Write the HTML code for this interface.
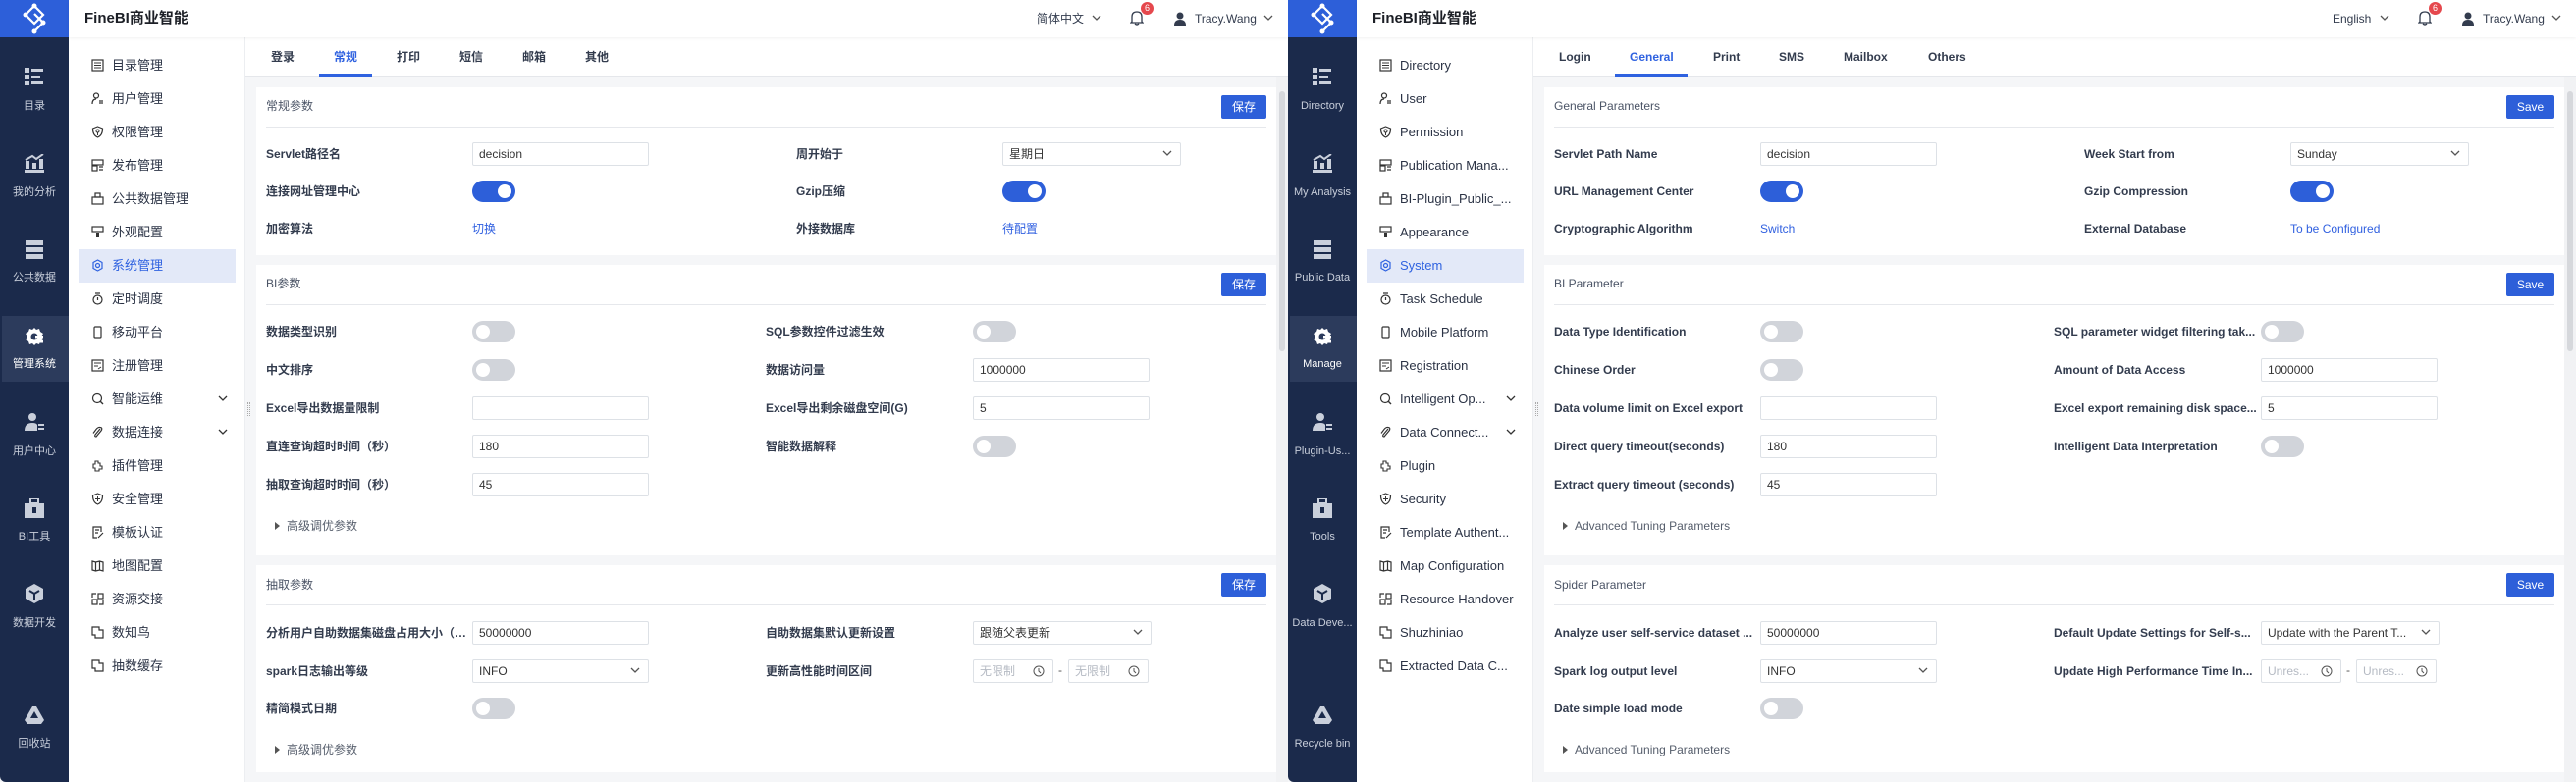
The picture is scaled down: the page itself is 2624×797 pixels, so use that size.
<!DOCTYPE html>
<html><head><meta charset="utf-8">
<style>
*{margin:0;padding:0;box-sizing:border-box}
body{width:2624px;height:797px;overflow:hidden;background:#f5f6f8;font-family:"Liberation Sans","Noto Sans CJK SC",sans-serif;}
.p{position:absolute;top:0;width:1312px;height:797px;overflow:hidden;background:#f5f6f8}
.a{position:absolute}
.side{left:0;top:0;width:70px;height:797px;background:#1b2a4b;border-bottom-left-radius:6px}
.logo{left:0;top:0;width:70px;height:38px;background:#2d5fd9}
.nl{position:absolute;left:0;width:70px;text-align:center;font-size:11px;color:#c9cfdb;line-height:14px;margin-top:-7px;white-space:nowrap;overflow:hidden}
.act{left:2px;top:322px;width:68px;height:67px;background:#2c3b5c}
.hdr{left:70px;top:0;width:1242px;height:38px;background:#fff;box-shadow:0 1px 3px rgba(0,0,0,.06);z-index:2}
.s2{left:70px;top:38px;width:180px;height:759px;background:#fff;border-right:1px solid #eceef1}
.si{position:absolute;left:114px;font-size:13px;color:#2b3345;line-height:16px;margin-top:-8px;white-space:nowrap}
.sic{position:absolute;left:93px;width:13px;height:13px;margin-top:-7px}
.sact{left:80px;top:254px;width:160px;height:34px;background:#e3e9f8}
.tabs{left:250px;top:38px;width:1062px;height:40px;background:#fff;border-bottom:1px solid #e5e7eb}
.tb{position:absolute;top:50px;font-size:12px;font-weight:bold;color:#333c4e;line-height:16px}
.card{left:261px;width:1039px;background:#fff}
.tt{position:absolute;left:271px;font-size:12px;color:#4b5466;line-height:16px;margin-top:-8px;white-space:nowrap}
.dv{position:absolute;left:271px;width:1019px;height:1px;background:#e6e8ec}
.sv{position:absolute;left:1244px;width:46px;height:24px;background:#2d5fd9;color:#fff;font-size:12px;text-align:center;line-height:24px;border-radius:2px}
.lb{position:absolute;font-size:12px;font-weight:bold;color:#333c4e;line-height:16px;margin-top:-8px;white-space:nowrap}
.in{position:absolute;height:24px;margin-top:-12px;border:1px solid #dde1e6;border-radius:2px;background:#fff;font-size:12px;color:#333;line-height:22px;padding-left:6px;white-space:nowrap;overflow:hidden}
.ph{color:#b5bac3}
.tg{position:absolute;width:44px;height:22px;margin-top:-11px;border-radius:11px;background:#d1d4da}
.tg::after{content:"";position:absolute;left:4px;top:4px;width:14px;height:14px;border-radius:50%;background:#fff}
.tg.on{background:#2d5fd9}
.tg.on::after{left:26px}
.lk{position:absolute;font-size:12px;color:#3060e0;line-height:16px;margin-top:-8px}
.ch{position:absolute;right:8px;top:7px}
.adv{position:absolute;left:280px;font-size:12px;color:#555d6b;line-height:16px;margin-top:-8px}
.adv::before{content:"";display:inline-block;border-left:5px solid #555;border-top:4px solid transparent;border-bottom:4px solid transparent;margin-right:7px;vertical-align:0}
.sc{left:1300px;top:78px;width:12px;height:719px;background:#f1f2f4}
.th{left:1303px;top:93px;width:6px;height:265px;background:#d6d8dc;border-radius:3px}
.hr{position:absolute;top:11px;font-size:12px;color:#333c4e;line-height:16px}
</style></head><body>

<div class="p" style="left:0">
 <div class="a side"></div>
 <div class="a logo"><svg width="70" height="38" viewBox="0 0 70 38"><g fill="none" stroke="#fff" stroke-width="2.2"><path d="M35 6 L44 15 L35 24 L26 15 Z"/><path d="M35 14 L44 23 L35 32"/></g><circle cx="35" cy="6" r="2.5" fill="#fff"/><circle cx="26" cy="15" r="2.5" fill="#fff"/><circle cx="44" cy="23" r="2.5" fill="#fff"/><circle cx="35" cy="32" r="2.5" fill="#fff"/></svg></div>
 <div class="a act"></div>
 <svg class="a" style="left:25px;top:69px" width="20" height="18"><g fill="#c9cfdb"><rect x="0" y="0" width="5" height="5"/><rect x="7" y="1" width="12" height="3"/><rect x="0" y="7" width="5" height="5"/><rect x="7" y="8" width="9" height="3"/><rect x="0" y="14" width="5" height="4"/><rect x="7" y="14" width="12" height="3"/></g></svg>
 <div class="nl" style="top:108px">目录</div>
 <svg class="a" style="left:25px;top:157px" width="20" height="19"><g fill="#c9cfdb"><rect x="0" y="16" width="20" height="3"/><rect x="1" y="7" width="4" height="8"/><rect x="8" y="9" width="4" height="6"/><rect x="15" y="5" width="4" height="10"/><path d="M1 6 L8 2 L12 5 L19 0" stroke="#c9cfdb" stroke-width="2" fill="none"/></g></svg>
 <div class="nl" style="top:196px">我的分析</div>
 <svg class="a" style="left:25px;top:245px" width="20" height="20"><g fill="#c9cfdb"><rect x="1" y="0" width="18" height="5"/><rect x="1" y="7" width="18" height="5"/><rect x="1" y="14" width="18" height="5"/></g></svg>
 <div class="nl" style="top:283px">公共数据</div>
 <svg class="a" style="left:25px;top:333px" width="20" height="20"><path d="M10 1 L12 3 L15 2 L16 5 L19 7 L17 10 L19 13 L16 15 L15 18 L12 17 L10 19 L8 17 L5 18 L4 15 L1 13 L3 10 L1 7 L4 5 L5 2 L8 3 Z" fill="#fff"/><circle cx="10" cy="10" r="3.5" fill="#2c3b5c"/><rect x="11" y="9" width="8" height="2.5" fill="#fff"/><rect x="11" y="14" width="8" height="2.5" fill="#fff"/></svg>
 <div class="nl" style="top:371px;color:#fff">管理系统</div>
 <svg class="a" style="left:25px;top:420px" width="20" height="20"><circle cx="8" cy="5" r="4" fill="#c9cfdb"/><path d="M0 19 Q0 11 8 11 Q12 11 13 13 L13 19 Z" fill="#c9cfdb"/><rect x="14" y="12" width="6" height="2" fill="#c9cfdb"/><rect x="14" y="16" width="6" height="2" fill="#c9cfdb"/></svg>
 <div class="nl" style="top:460px">用户中心</div>
 <svg class="a" style="left:25px;top:508px" width="20" height="20"><rect x="6" y="0" width="8" height="5" fill="none" stroke="#c9cfdb" stroke-width="2"/><rect x="0" y="5" width="20" height="15" fill="#c9cfdb"/><rect x="8" y="9" width="4" height="6" fill="#1b2a4b"/></svg>
 <div class="nl" style="top:547px">BI工具</div>
 <svg class="a" style="left:25px;top:595px" width="20" height="20"><path d="M10 0 L19 5 L19 15 L10 20 L1 15 L1 5 Z" fill="#c9cfdb"/><path d="M5 7 L10 10 L15 7 M10 10 L10 16" stroke="#1b2a4b" stroke-width="2" fill="none"/></svg>
 <div class="nl" style="top:635px">数据开发</div>
 <svg class="a" style="left:25px;top:720px" width="20" height="18"><path d="M8 0 L12 0 L20 14 L17 18 L3 18 L0 14 Z" fill="#c9cfdb"/><path d="M10 5 L6 12 L14 12 Z" fill="#1b2a4b"/></svg>
 <div class="nl" style="top:758px">回收站</div>

 <div class="a hdr">
  <div class="a" style="left:16px;top:10px;font-size:15px;font-weight:bold;color:#1c1f26;line-height:18px">FineBI商业智能</div>
  <div class="hr" style="left:986px">简体中文</div>
  <svg class="a" style="left:1042px;top:15px" width="10" height="7"><path d="M1 1 L5 5 L9 1" stroke="#555" stroke-width="1.3" fill="none"/></svg>
  <svg class="a" style="left:1081px;top:10px" width="14" height="16"><path d="M2 12 L2 7 Q2 2 7 2 Q12 2 12 7 L12 12 L13 13 L1 13 Z M5 14 Q7 16 9 14" stroke="#333c4e" stroke-width="1.3" fill="none"/></svg>
  <div class="a" style="left:1092px;top:2px;width:13px;height:13px;border-radius:50%;background:#e5484d;color:#fff;font-size:9px;line-height:13px;text-align:center">6</div>
  <svg class="a" style="left:1126px;top:12px" width="12" height="14"><circle cx="6" cy="4" r="3.5" fill="#333c4e"/><path d="M0 14 Q0 8 6 8 Q12 8 12 14 Z" fill="#333c4e"/></svg>
  <div class="hr" style="left:1147px">Tracy.Wang</div>
  <svg class="a" style="left:1217px;top:15px" width="10" height="7"><path d="M1 1 L5 5 L9 1" stroke="#555" stroke-width="1.3" fill="none"/></svg>
 </div>

 <div class="a s2"></div>
 <div class="a sact"></div>
 <svg class="sic" style="top:67px" viewBox="0 0 13 13"><rect x="1" y="1" width="11" height="11" fill="none" stroke="#333" stroke-width="1.2"/><path d="M3 4h7M3 6.5h7M3 9h7" stroke="#333"/></svg><div class="si" style="top:67px">目录管理</div>
 <svg class="sic" style="top:101px" viewBox="0 0 13 13"><circle cx="5" cy="3.5" r="2.5" fill="none" stroke="#333" stroke-width="1.2"/><path d="M1 12 Q1 7 5 7 M8 9h4M8 11h4" stroke="#333" stroke-width="1.2" fill="none"/></svg><div class="si" style="top:101px">用户管理</div>
 <svg class="sic" style="top:135px" viewBox="0 0 13 13"><path d="M6.5 1 L11.5 3 Q11.5 10 6.5 12 Q1.5 10 1.5 3 Z" fill="none" stroke="#333" stroke-width="1.2"/><circle cx="6.5" cy="5.5" r="1.5" fill="none" stroke="#333"/><path d="M6.5 7v3" stroke="#333"/></svg><div class="si" style="top:135px">权限管理</div>
 <svg class="sic" style="top:169px" viewBox="0 0 13 13"><rect x="1" y="1" width="11" height="5" fill="none" stroke="#333" stroke-width="1.2"/><rect x="1" y="7" width="5" height="5" fill="none" stroke="#333" stroke-width="1.2"/><path d="M8 8h4M8 11h4" stroke="#333" stroke-width="1.2"/></svg><div class="si" style="top:169px">发布管理</div>
 <svg class="sic" style="top:203px" viewBox="0 0 13 13"><rect x="1" y="5" width="11" height="7" fill="none" stroke="#333" stroke-width="1.2"/><rect x="4" y="1" width="5" height="4" fill="none" stroke="#333" stroke-width="1.2"/></svg><div class="si" style="top:203px">公共数据管理</div>
 <svg class="sic" style="top:237px" viewBox="0 0 13 13"><rect x="1" y="1" width="11" height="5" fill="none" stroke="#333" stroke-width="1.2"/><rect x="5" y="7" width="3" height="5" fill="#333"/></svg><div class="si" style="top:237px">外观配置</div>
 <svg class="sic" style="top:271px" viewBox="0 0 13 13"><path d="M6.5 1 L11 3.5 L11 9.5 L6.5 12 L2 9.5 L2 3.5 Z" fill="none" stroke="#2f62e0" stroke-width="1.2"/><circle cx="6.5" cy="6.5" r="2" fill="none" stroke="#2f62e0" stroke-width="1.2"/></svg><div class="si" style="top:271px;color:#2f62e0">系统管理</div>
 <svg class="sic" style="top:305px" viewBox="0 0 13 13"><circle cx="6.5" cy="7.5" r="4.5" fill="none" stroke="#333" stroke-width="1.2"/><path d="M4 1h5M6.5 5v3" stroke="#333" stroke-width="1.2"/></svg><div class="si" style="top:305px">定时调度</div>
 <svg class="sic" style="top:339px" viewBox="0 0 13 13"><rect x="3" y="1" width="7" height="11" rx="1" fill="none" stroke="#333" stroke-width="1.2"/></svg><div class="si" style="top:339px">移动平台</div>
 <svg class="sic" style="top:373px" viewBox="0 0 13 13"><rect x="1" y="1" width="11" height="11" fill="none" stroke="#333" stroke-width="1.2"/><path d="M3 4h7M3 7h4M7 10l3-2" stroke="#333"/></svg><div class="si" style="top:373px">注册管理</div>
 <svg class="sic" style="top:407px" viewBox="0 0 13 13"><circle cx="6" cy="6" r="4.5" fill="none" stroke="#333" stroke-width="1.2"/><path d="M9 9l3 3" stroke="#333" stroke-width="1.4"/></svg><div class="si" style="top:407px">智能运维</div>
 <svg class="a" style="left:222px;top:403px" width="10" height="7"><path d="M1 1 L5 5 L9 1" stroke="#333" stroke-width="1.3" fill="none"/></svg>
 <svg class="sic" style="top:441px" viewBox="0 0 13 13"><path d="M9 3 L4 9 Q3 11 5 11 L10 5 Q12 2 9 1.5 Q7 1 5 3.5 L2 7.5" stroke="#333" stroke-width="1.2" fill="none"/></svg><div class="si" style="top:441px">数据连接</div>
 <svg class="a" style="left:222px;top:437px" width="10" height="7"><path d="M1 1 L5 5 L9 1" stroke="#333" stroke-width="1.3" fill="none"/></svg>
 <svg class="sic" style="top:475px" viewBox="0 0 13 13"><path d="M4 2h3v2h2v3h2v3H8v2H4V9H2V5h2z" fill="none" stroke="#333" stroke-width="1.1"/></svg><div class="si" style="top:475px">插件管理</div>
 <svg class="sic" style="top:509px" viewBox="0 0 13 13"><path d="M6.5 1 L11.5 3 Q11.5 10 6.5 12 Q1.5 10 1.5 3 Z" fill="none" stroke="#333" stroke-width="1.2"/><path d="M6.5 4v5M4 6.5h5" stroke="#333"/></svg><div class="si" style="top:509px">安全管理</div>
 <svg class="sic" style="top:543px" viewBox="0 0 13 13"><path d="M10 6V1H2v11h4" fill="none" stroke="#333" stroke-width="1.2"/><path d="M4 4h4M4 7h3M7 12l5-5" stroke="#333" stroke-width="1.2"/></svg><div class="si" style="top:543px">模板认证</div>
 <svg class="sic" style="top:577px" viewBox="0 0 13 13"><path d="M1 2l3.5 1 4-1 3.5 1v9l-3.5-1-4 1L1 11z M4.5 3v9M8.5 2v9" fill="none" stroke="#333" stroke-width="1.2"/></svg><div class="si" style="top:577px">地图配置</div>
 <svg class="sic" style="top:611px" viewBox="0 0 13 13"><rect x="7" y="1" width="5" height="5" fill="none" stroke="#333" stroke-width="1.2"/><rect x="1" y="7" width="5" height="5" fill="none" stroke="#333" stroke-width="1.2"/><path d="M1 5V1h4M12 8v4H8" stroke="#333" stroke-width="1.2" fill="none"/></svg><div class="si" style="top:611px">资源交接</div>
 <svg class="sic" style="top:645px" viewBox="0 0 13 13"><path d="M1 1h7v3h4v8H4V9H1z" fill="none" stroke="#333" stroke-width="1.2"/></svg><div class="si" style="top:645px">数知鸟</div>
 <svg class="sic" style="top:679px" viewBox="0 0 13 13"><path d="M1 1h7v3h4v8H4V9H1z" fill="none" stroke="#333" stroke-width="1.2"/></svg><div class="si" style="top:679px">抽数缓存</div>

 <div class="a tabs"></div>
 <div class="tb" style="left:276px">登录</div>
 <div class="tb" style="left:340px;color:#2f62e0">常规</div>
 <div class="a" style="left:325px;top:75px;width:54px;height:3px;background:#2f62e0"></div>
 <div class="tb" style="left:404px">打印</div>
 <div class="tb" style="left:468px">短信</div>
 <div class="tb" style="left:532px">邮箱</div>
 <div class="tb" style="left:596px">其他</div>

 <div class="a sc"></div><div class="a th"></div>
 <div class="a" style="left:252px;top:410px;width:3px;height:14px;border-left:1px dotted #aaa;border-right:1px dotted #aaa"></div>

 <div class="a card" style="top:89px;height:171px"></div>
 <div class="tt" style="top:108px">常规参数</div>
 <div class="sv" style="top:97px">保存</div>
 <div class="dv" style="top:129px"></div>
 <div class="lb" style="left:271px;top:157px">Servlet路径名</div>
 <div class="in" style="left:481px;top:157px;width:180px">decision</div>
 <div class="lb" style="left:811px;top:157px">周开始于</div>
 <div class="in" style="left:1021px;top:157px;width:182px">星期日<svg class="ch" width="10" height="7"><path d="M1 1 L5 5 L9 1" stroke="#555" stroke-width="1.3" fill="none"/></svg></div>
 <div class="lb" style="left:271px;top:195px">连接网址管理中心</div>
 <div class="tg on" style="left:481px;top:195px"></div>
 <div class="lb" style="left:811px;top:195px">Gzip压缩</div>
 <div class="tg on" style="left:1021px;top:195px"></div>
 <div class="lb" style="left:271px;top:233px">加密算法</div>
 <div class="lk" style="left:481px;top:233px">切换</div>
 <div class="lb" style="left:811px;top:233px">外接数据库</div>
 <div class="lk" style="left:1021px;top:233px">待配置</div>

 <div class="a card" style="top:270px;height:296px"></div>
 <div class="tt" style="top:289px">BI参数</div>
 <div class="sv" style="top:278px">保存</div>
 <div class="dv" style="top:310px"></div>
 <div class="lb" style="left:271px;top:338px">数据类型识别</div>
 <div class="tg" style="left:481px;top:338px"></div>
 <div class="lb" style="left:780px;top:338px">SQL参数控件过滤生效</div>
 <div class="tg" style="left:991px;top:338px"></div>
 <div class="lb" style="left:271px;top:377px">中文排序</div>
 <div class="tg" style="left:481px;top:377px"></div>
 <div class="lb" style="left:780px;top:377px">数据访问量</div>
 <div class="in" style="left:991px;top:377px;width:180px">1000000</div>
 <div class="lb" style="left:271px;top:416px">Excel导出数据量限制</div>
 <div class="in" style="left:481px;top:416px;width:180px"></div>
 <div class="lb" style="left:780px;top:416px">Excel导出剩余磁盘空间(G)</div>
 <div class="in" style="left:991px;top:416px;width:180px">5</div>
 <div class="lb" style="left:271px;top:455px">直连查询超时时间（秒）</div>
 <div class="in" style="left:481px;top:455px;width:180px">180</div>
 <div class="lb" style="left:780px;top:455px">智能数据解释</div>
 <div class="tg" style="left:991px;top:455px"></div>
 <div class="lb" style="left:271px;top:494px">抽取查询超时时间（秒）</div>
 <div class="in" style="left:481px;top:494px;width:180px">45</div>
 <div class="adv" style="top:536px">高级调优参数</div>

 <div class="a card" style="top:576px;height:211px"></div>
 <div class="tt" style="top:596px">抽取参数</div>
 <div class="sv" style="top:584px">保存</div>
 <div class="dv" style="top:616px"></div>
 <div class="lb" style="left:271px;top:645px">分析用户自助数据集磁盘占用大小（…</div>
 <div class="in" style="left:481px;top:645px;width:180px">50000000</div>
 <div class="lb" style="left:780px;top:645px">自助数据集默认更新设置</div>
 <div class="in" style="left:991px;top:645px;width:182px">跟随父表更新<svg class="ch" width="10" height="7"><path d="M1 1 L5 5 L9 1" stroke="#555" stroke-width="1.3" fill="none"/></svg></div>
 <div class="lb" style="left:271px;top:684px">spark日志输出等级</div>
 <div class="in" style="left:481px;top:684px;width:180px">INFO<svg class="ch" width="10" height="7"><path d="M1 1 L5 5 L9 1" stroke="#555" stroke-width="1.3" fill="none"/></svg></div>
 <div class="lb" style="left:780px;top:684px">更新高性能时间区间</div>
 <div class="in ph" style="left:991px;top:684px;width:82px">无限制<svg class="ch" style="top:5px" width="12" height="12"><circle cx="6" cy="6" r="5" stroke="#555" fill="none"/><path d="M6 3v3l2 2" stroke="#555" fill="none"/></svg></div>
 <div class="a" style="left:1078px;top:676px;font-size:12px;color:#555">-</div>
 <div class="in ph" style="left:1088px;top:684px;width:82px">无限制<svg class="ch" style="top:5px" width="12" height="12"><circle cx="6" cy="6" r="5" stroke="#555" fill="none"/><path d="M6 3v3l2 2" stroke="#555" fill="none"/></svg></div>
 <div class="lb" style="left:271px;top:722px">精简模式日期</div>
 <div class="tg" style="left:481px;top:722px"></div>
 <div class="adv" style="top:764px">高级调优参数</div>
</div>

<div class="p" style="left:1312px">
 <div class="a side"></div>
 <div class="a logo"><svg width="70" height="38" viewBox="0 0 70 38"><g fill="none" stroke="#fff" stroke-width="2.2"><path d="M35 6 L44 15 L35 24 L26 15 Z"/><path d="M35 14 L44 23 L35 32"/></g><circle cx="35" cy="6" r="2.5" fill="#fff"/><circle cx="26" cy="15" r="2.5" fill="#fff"/><circle cx="44" cy="23" r="2.5" fill="#fff"/><circle cx="35" cy="32" r="2.5" fill="#fff"/></svg></div>
 <div class="a act"></div>
 <svg class="a" style="left:25px;top:69px" width="20" height="18"><g fill="#c9cfdb"><rect x="0" y="0" width="5" height="5"/><rect x="7" y="1" width="12" height="3"/><rect x="0" y="7" width="5" height="5"/><rect x="7" y="8" width="9" height="3"/><rect x="0" y="14" width="5" height="4"/><rect x="7" y="14" width="12" height="3"/></g></svg>
 <div class="nl" style="top:108px">Directory</div>
 <svg class="a" style="left:25px;top:157px" width="20" height="19"><g fill="#c9cfdb"><rect x="0" y="16" width="20" height="3"/><rect x="1" y="7" width="4" height="8"/><rect x="8" y="9" width="4" height="6"/><rect x="15" y="5" width="4" height="10"/><path d="M1 6 L8 2 L12 5 L19 0" stroke="#c9cfdb" stroke-width="2" fill="none"/></g></svg>
 <div class="nl" style="top:196px">My Analysis</div>
 <svg class="a" style="left:25px;top:245px" width="20" height="20"><g fill="#c9cfdb"><rect x="1" y="0" width="18" height="5"/><rect x="1" y="7" width="18" height="5"/><rect x="1" y="14" width="18" height="5"/></g></svg>
 <div class="nl" style="top:283px">Public Data</div>
 <svg class="a" style="left:25px;top:333px" width="20" height="20"><path d="M10 1 L12 3 L15 2 L16 5 L19 7 L17 10 L19 13 L16 15 L15 18 L12 17 L10 19 L8 17 L5 18 L4 15 L1 13 L3 10 L1 7 L4 5 L5 2 L8 3 Z" fill="#fff"/><circle cx="10" cy="10" r="3.5" fill="#2c3b5c"/><rect x="11" y="9" width="8" height="2.5" fill="#fff"/><rect x="11" y="14" width="8" height="2.5" fill="#fff"/></svg>
 <div class="nl" style="top:371px;color:#fff">Manage</div>
 <svg class="a" style="left:25px;top:420px" width="20" height="20"><circle cx="8" cy="5" r="4" fill="#c9cfdb"/><path d="M0 19 Q0 11 8 11 Q12 11 13 13 L13 19 Z" fill="#c9cfdb"/><rect x="14" y="12" width="6" height="2" fill="#c9cfdb"/><rect x="14" y="16" width="6" height="2" fill="#c9cfdb"/></svg>
 <div class="nl" style="top:460px">Plugin-Us...</div>
 <svg class="a" style="left:25px;top:508px" width="20" height="20"><rect x="6" y="0" width="8" height="5" fill="none" stroke="#c9cfdb" stroke-width="2"/><rect x="0" y="5" width="20" height="15" fill="#c9cfdb"/><rect x="8" y="9" width="4" height="6" fill="#1b2a4b"/></svg>
 <div class="nl" style="top:547px">Tools</div>
 <svg class="a" style="left:25px;top:595px" width="20" height="20"><path d="M10 0 L19 5 L19 15 L10 20 L1 15 L1 5 Z" fill="#c9cfdb"/><path d="M5 7 L10 10 L15 7 M10 10 L10 16" stroke="#1b2a4b" stroke-width="2" fill="none"/></svg>
 <div class="nl" style="top:635px">Data Deve...</div>
 <svg class="a" style="left:25px;top:720px" width="20" height="18"><path d="M8 0 L12 0 L20 14 L17 18 L3 18 L0 14 Z" fill="#c9cfdb"/><path d="M10 5 L6 12 L14 12 Z" fill="#1b2a4b"/></svg>
 <div class="nl" style="top:758px">Recycle bin</div>

 <div class="a hdr">
  <div class="a" style="left:16px;top:10px;font-size:15px;font-weight:bold;color:#1c1f26;line-height:18px">FineBI商业智能</div>
  <div class="hr" style="left:994px">English</div>
  <svg class="a" style="left:1042px;top:15px" width="10" height="7"><path d="M1 1 L5 5 L9 1" stroke="#555" stroke-width="1.3" fill="none"/></svg>
  <svg class="a" style="left:1081px;top:10px" width="14" height="16"><path d="M2 12 L2 7 Q2 2 7 2 Q12 2 12 7 L12 12 L13 13 L1 13 Z M5 14 Q7 16 9 14" stroke="#333c4e" stroke-width="1.3" fill="none"/></svg>
  <div class="a" style="left:1092px;top:2px;width:13px;height:13px;border-radius:50%;background:#e5484d;color:#fff;font-size:9px;line-height:13px;text-align:center">6</div>
  <svg class="a" style="left:1126px;top:12px" width="12" height="14"><circle cx="6" cy="4" r="3.5" fill="#333c4e"/><path d="M0 14 Q0 8 6 8 Q12 8 12 14 Z" fill="#333c4e"/></svg>
  <div class="hr" style="left:1147px">Tracy.Wang</div>
  <svg class="a" style="left:1217px;top:15px" width="10" height="7"><path d="M1 1 L5 5 L9 1" stroke="#555" stroke-width="1.3" fill="none"/></svg>
 </div>

 <div class="a s2"></div>
 <div class="a sact"></div>
 <svg class="sic" style="top:67px" viewBox="0 0 13 13"><rect x="1" y="1" width="11" height="11" fill="none" stroke="#333" stroke-width="1.2"/><path d="M3 4h7M3 6.5h7M3 9h7" stroke="#333"/></svg><div class="si" style="top:67px">Directory</div>
 <svg class="sic" style="top:101px" viewBox="0 0 13 13"><circle cx="5" cy="3.5" r="2.5" fill="none" stroke="#333" stroke-width="1.2"/><path d="M1 12 Q1 7 5 7 M8 9h4M8 11h4" stroke="#333" stroke-width="1.2" fill="none"/></svg><div class="si" style="top:101px">User</div>
 <svg class="sic" style="top:135px" viewBox="0 0 13 13"><path d="M6.5 1 L11.5 3 Q11.5 10 6.5 12 Q1.5 10 1.5 3 Z" fill="none" stroke="#333" stroke-width="1.2"/><circle cx="6.5" cy="5.5" r="1.5" fill="none" stroke="#333"/><path d="M6.5 7v3" stroke="#333"/></svg><div class="si" style="top:135px">Permission</div>
 <svg class="sic" style="top:169px" viewBox="0 0 13 13"><rect x="1" y="1" width="11" height="5" fill="none" stroke="#333" stroke-width="1.2"/><rect x="1" y="7" width="5" height="5" fill="none" stroke="#333" stroke-width="1.2"/><path d="M8 8h4M8 11h4" stroke="#333" stroke-width="1.2"/></svg><div class="si" style="top:169px">Publication Mana...</div>
 <svg class="sic" style="top:203px" viewBox="0 0 13 13"><rect x="1" y="5" width="11" height="7" fill="none" stroke="#333" stroke-width="1.2"/><rect x="4" y="1" width="5" height="4" fill="none" stroke="#333" stroke-width="1.2"/></svg><div class="si" style="top:203px">BI-Plugin_Public_...</div>
 <svg class="sic" style="top:237px" viewBox="0 0 13 13"><rect x="1" y="1" width="11" height="5" fill="none" stroke="#333" stroke-width="1.2"/><rect x="5" y="7" width="3" height="5" fill="#333"/></svg><div class="si" style="top:237px">Appearance</div>
 <svg class="sic" style="top:271px" viewBox="0 0 13 13"><path d="M6.5 1 L11 3.5 L11 9.5 L6.5 12 L2 9.5 L2 3.5 Z" fill="none" stroke="#2f62e0" stroke-width="1.2"/><circle cx="6.5" cy="6.5" r="2" fill="none" stroke="#2f62e0" stroke-width="1.2"/></svg><div class="si" style="top:271px;color:#2f62e0">System</div>
 <svg class="sic" style="top:305px" viewBox="0 0 13 13"><circle cx="6.5" cy="7.5" r="4.5" fill="none" stroke="#333" stroke-width="1.2"/><path d="M4 1h5M6.5 5v3" stroke="#333" stroke-width="1.2"/></svg><div class="si" style="top:305px">Task Schedule</div>
 <svg class="sic" style="top:339px" viewBox="0 0 13 13"><rect x="3" y="1" width="7" height="11" rx="1" fill="none" stroke="#333" stroke-width="1.2"/></svg><div class="si" style="top:339px">Mobile Platform</div>
 <svg class="sic" style="top:373px" viewBox="0 0 13 13"><rect x="1" y="1" width="11" height="11" fill="none" stroke="#333" stroke-width="1.2"/><path d="M3 4h7M3 7h4M7 10l3-2" stroke="#333"/></svg><div class="si" style="top:373px">Registration</div>
 <svg class="sic" style="top:407px" viewBox="0 0 13 13"><circle cx="6" cy="6" r="4.5" fill="none" stroke="#333" stroke-width="1.2"/><path d="M9 9l3 3" stroke="#333" stroke-width="1.4"/></svg><div class="si" style="top:407px">Intelligent Op...</div>
 <svg class="a" style="left:222px;top:403px" width="10" height="7"><path d="M1 1 L5 5 L9 1" stroke="#333" stroke-width="1.3" fill="none"/></svg>
 <svg class="sic" style="top:441px" viewBox="0 0 13 13"><path d="M9 3 L4 9 Q3 11 5 11 L10 5 Q12 2 9 1.5 Q7 1 5 3.5 L2 7.5" stroke="#333" stroke-width="1.2" fill="none"/></svg><div class="si" style="top:441px">Data Connect...</div>
 <svg class="a" style="left:222px;top:437px" width="10" height="7"><path d="M1 1 L5 5 L9 1" stroke="#333" stroke-width="1.3" fill="none"/></svg>
 <svg class="sic" style="top:475px" viewBox="0 0 13 13"><path d="M4 2h3v2h2v3h2v3H8v2H4V9H2V5h2z" fill="none" stroke="#333" stroke-width="1.1"/></svg><div class="si" style="top:475px">Plugin</div>
 <svg class="sic" style="top:509px" viewBox="0 0 13 13"><path d="M6.5 1 L11.5 3 Q11.5 10 6.5 12 Q1.5 10 1.5 3 Z" fill="none" stroke="#333" stroke-width="1.2"/><path d="M6.5 4v5M4 6.5h5" stroke="#333"/></svg><div class="si" style="top:509px">Security</div>
 <svg class="sic" style="top:543px" viewBox="0 0 13 13"><path d="M10 6V1H2v11h4" fill="none" stroke="#333" stroke-width="1.2"/><path d="M4 4h4M4 7h3M7 12l5-5" stroke="#333" stroke-width="1.2"/></svg><div class="si" style="top:543px">Template Authent...</div>
 <svg class="sic" style="top:577px" viewBox="0 0 13 13"><path d="M1 2l3.5 1 4-1 3.5 1v9l-3.5-1-4 1L1 11z M4.5 3v9M8.5 2v9" fill="none" stroke="#333" stroke-width="1.2"/></svg><div class="si" style="top:577px">Map Configuration</div>
 <svg class="sic" style="top:611px" viewBox="0 0 13 13"><rect x="7" y="1" width="5" height="5" fill="none" stroke="#333" stroke-width="1.2"/><rect x="1" y="7" width="5" height="5" fill="none" stroke="#333" stroke-width="1.2"/><path d="M1 5V1h4M12 8v4H8" stroke="#333" stroke-width="1.2" fill="none"/></svg><div class="si" style="top:611px">Resource Handover</div>
 <svg class="sic" style="top:645px" viewBox="0 0 13 13"><path d="M1 1h7v3h4v8H4V9H1z" fill="none" stroke="#333" stroke-width="1.2"/></svg><div class="si" style="top:645px">Shuzhiniao</div>
 <svg class="sic" style="top:679px" viewBox="0 0 13 13"><path d="M1 1h7v3h4v8H4V9H1z" fill="none" stroke="#333" stroke-width="1.2"/></svg><div class="si" style="top:679px">Extracted Data C...</div>

 <div class="a tabs"></div>
 <div class="tb" style="left:276px">Login</div>
 <div class="tb" style="left:348px;color:#2f62e0">General</div>
 <div class="a" style="left:333px;top:75px;width:74px;height:3px;background:#2f62e0"></div>
 <div class="tb" style="left:433px">Print</div>
 <div class="tb" style="left:500px">SMS</div>
 <div class="tb" style="left:566px">Mailbox</div>
 <div class="tb" style="left:652px">Others</div>

 <div class="a sc"></div><div class="a th"></div>
 <div class="a" style="left:252px;top:410px;width:3px;height:14px;border-left:1px dotted #aaa;border-right:1px dotted #aaa"></div>

 <div class="a card" style="top:89px;height:171px"></div>
 <div class="tt" style="top:108px">General Parameters</div>
 <div class="sv" style="top:97px;left:1241px;width:49px">Save</div>
 <div class="dv" style="top:129px"></div>
 <div class="lb" style="left:271px;top:157px">Servlet Path Name</div>
 <div class="in" style="left:481px;top:157px;width:180px">decision</div>
 <div class="lb" style="left:811px;top:157px">Week Start from</div>
 <div class="in" style="left:1021px;top:157px;width:182px">Sunday<svg class="ch" width="10" height="7"><path d="M1 1 L5 5 L9 1" stroke="#555" stroke-width="1.3" fill="none"/></svg></div>
 <div class="lb" style="left:271px;top:195px">URL Management Center</div>
 <div class="tg on" style="left:481px;top:195px"></div>
 <div class="lb" style="left:811px;top:195px">Gzip Compression</div>
 <div class="tg on" style="left:1021px;top:195px"></div>
 <div class="lb" style="left:271px;top:233px">Cryptographic Algorithm</div>
 <div class="lk" style="left:481px;top:233px">Switch</div>
 <div class="lb" style="left:811px;top:233px">External Database</div>
 <div class="lk" style="left:1021px;top:233px">To be Configured</div>

 <div class="a card" style="top:270px;height:296px"></div>
 <div class="tt" style="top:289px">BI Parameter</div>
 <div class="sv" style="top:278px;left:1241px;width:49px">Save</div>
 <div class="dv" style="top:310px"></div>
 <div class="lb" style="left:271px;top:338px">Data Type Identification</div>
 <div class="tg" style="left:481px;top:338px"></div>
 <div class="lb" style="left:780px;top:338px">SQL parameter widget filtering tak...</div>
 <div class="tg" style="left:991px;top:338px"></div>
 <div class="lb" style="left:271px;top:377px">Chinese Order</div>
 <div class="tg" style="left:481px;top:377px"></div>
 <div class="lb" style="left:780px;top:377px">Amount of Data Access</div>
 <div class="in" style="left:991px;top:377px;width:180px">1000000</div>
 <div class="lb" style="left:271px;top:416px">Data volume limit on Excel export</div>
 <div class="in" style="left:481px;top:416px;width:180px"></div>
 <div class="lb" style="left:780px;top:416px">Excel export remaining disk space...</div>
 <div class="in" style="left:991px;top:416px;width:180px">5</div>
 <div class="lb" style="left:271px;top:455px">Direct query timeout(seconds)</div>
 <div class="in" style="left:481px;top:455px;width:180px">180</div>
 <div class="lb" style="left:780px;top:455px">Intelligent Data Interpretation</div>
 <div class="tg" style="left:991px;top:455px"></div>
 <div class="lb" style="left:271px;top:494px">Extract query timeout (seconds)</div>
 <div class="in" style="left:481px;top:494px;width:180px">45</div>
 <div class="adv" style="top:536px">Advanced Tuning Parameters</div>

 <div class="a card" style="top:576px;height:211px"></div>
 <div class="tt" style="top:596px">Spider Parameter</div>
 <div class="sv" style="top:584px;left:1241px;width:49px">Save</div>
 <div class="dv" style="top:616px"></div>
 <div class="lb" style="left:271px;top:645px">Analyze user self-service dataset ...</div>
 <div class="in" style="left:481px;top:645px;width:180px">50000000</div>
 <div class="lb" style="left:780px;top:645px">Default Update Settings for Self-s...</div>
 <div class="in" style="left:991px;top:645px;width:182px">Update with the Parent T...<svg class="ch" width="10" height="7"><path d="M1 1 L5 5 L9 1" stroke="#555" stroke-width="1.3" fill="none"/></svg></div>
 <div class="lb" style="left:271px;top:684px">Spark log output level</div>
 <div class="in" style="left:481px;top:684px;width:180px">INFO<svg class="ch" width="10" height="7"><path d="M1 1 L5 5 L9 1" stroke="#555" stroke-width="1.3" fill="none"/></svg></div>
 <div class="lb" style="left:780px;top:684px">Update High Performance Time In...</div>
 <div class="in ph" style="left:991px;top:684px;width:82px">Unres...<svg class="ch" style="top:5px" width="12" height="12"><circle cx="6" cy="6" r="5" stroke="#555" fill="none"/><path d="M6 3v3l2 2" stroke="#555" fill="none"/></svg></div>
 <div class="a" style="left:1078px;top:676px;font-size:12px;color:#555">-</div>
 <div class="in ph" style="left:1088px;top:684px;width:82px">Unres...<svg class="ch" style="top:5px" width="12" height="12"><circle cx="6" cy="6" r="5" stroke="#555" fill="none"/><path d="M6 3v3l2 2" stroke="#555" fill="none"/></svg></div>
 <div class="lb" style="left:271px;top:722px">Date simple load mode</div>
 <div class="tg" style="left:481px;top:722px"></div>
 <div class="adv" style="top:764px">Advanced Tuning Parameters</div>
</div>
</body></html>
